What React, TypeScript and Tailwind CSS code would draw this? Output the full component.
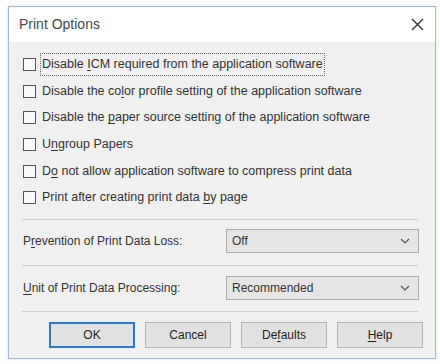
import React from "react";

const font = { fontFamily: '"Liberation Sans", Arial, sans-serif' };

// label text with one underlined access key
const Mn = ({ pre, k, post }: { pre: string; k: string; post: string }) => (
  <span>
    {pre}
    <span className="underline underline-offset-2">{k}</span>
    {post}
  </span>
);

const options = [
  { pre: "Disable ", k: "I", post: "CM required from the application software", focus: true },
  { pre: "Disable the co", k: "l", post: "or profile setting of the application software" },
  { pre: "Disable the ", k: "p", post: "aper source setting of the application software" },
  { pre: "U", k: "n", post: "group Papers" },
  { pre: "D", k: "o", post: " not allow application software to compress print data" },
  { pre: "Print after creating print data ", k: "b", post: "y page" },
];

const Chevron = () => (
  <svg width="10" height="6" viewBox="0 0 10 6" className="text-[#555]">
    <path d="M1 1l4 4 4-4" fill="none" stroke="currentColor" strokeWidth="1.2" />
  </svg>
);

const Select = ({ value }: { value: string }) => (
  <div className="flex h-[24px] w-[193px] items-center justify-between border border-[#adadad] bg-[#e5e5e5] pl-[5px] pr-[8px]">
    <span>{value}</span>
    <Chevron />
  </div>
);

const Separator = ({ className }: { className: string }) => (
  <div className={`ml-[13px] mr-[17px] h-px bg-[#cfcfcf] ${className}`} />
);

const Button = ({ children, primary }: { children: React.ReactNode; primary?: boolean }) => (
  <div
    className={`flex h-[26px] w-[86px] items-center justify-center bg-[#e1e1e1] ${
      primary ? "border-2 border-[#2a7bc4]" : "border border-[#b5b5b5]"
    }`}
  >
    {children}
  </div>
);

export default function App() {
  return (
    <div className="h-[364px] w-[440px] overflow-hidden bg-white pl-[8px] pt-[6px]" style={font}>
      <div className="flex h-[353px] w-[428px] flex-col border border-[#9fbad4] shadow-[0_0_3px_rgba(120,160,200,0.35)]">
        {/* title bar */}
        <div className="flex h-[35px] items-center justify-between bg-white pl-[10px] pr-[11px]">
          <span className="text-[14px] text-[#484848]">Print Options</span>
          <svg width="13" height="13" viewBox="0 0 13 13" className="text-[#333]">
            <path d="M1 1l11 11M12 1L1 12" stroke="currentColor" strokeWidth="1.4" />
          </svg>
        </div>

        <div className="flex flex-1 flex-col bg-[#f0f0f0] pt-[9px] text-[12px] text-[#333]">
          <div className="flex flex-col pl-[14px] text-[12.5px]">
            {options.map((o, i) => (
              <div key={i} className="flex h-[26.7px] items-center">
                <div className="h-[13px] w-[13px] border border-[#555] bg-[#fafafa]" />
                <div
                  className={`ml-[4px] px-[1px] py-px ${
                    o.focus ? "border border-dotted border-[#666]" : "border border-transparent"
                  }`}
                >
                  <Mn pre={o.pre} k={o.k} post={o.post} />
                </div>
              </div>
            ))}
          </div>

          <Separator className="mt-[8px]" />

          <div className="mt-[9px] flex items-center pl-[14px]">
            <span className="w-[203px]">
              <Mn pre="P" k="r" post="evention of Print Data Loss:" />
            </span>
            <Select value="Off" />
          </div>

          <Separator className="mt-[12px]" />

          <div className="mt-[10px] flex items-center pl-[14px]">
            <span className="w-[203px]">
              <Mn pre="" k="U" post="nit of Print Data Processing:" />
            </span>
            <Select value="Recommended" />
          </div>

          <Separator className="mt-[11px]" />

          <div className="mt-[10px] flex justify-end gap-[10px] pr-[12px] text-[#222]">
            <Button primary>OK</Button>
            <Button>Cancel</Button>
            <Button>
              <Mn pre="De" k="f" post="aults" />
            </Button>
            <Button>
              <Mn pre="" k="H" post="elp" />
            </Button>
          </div>
        </div>
      </div>
    </div>
  );
}
